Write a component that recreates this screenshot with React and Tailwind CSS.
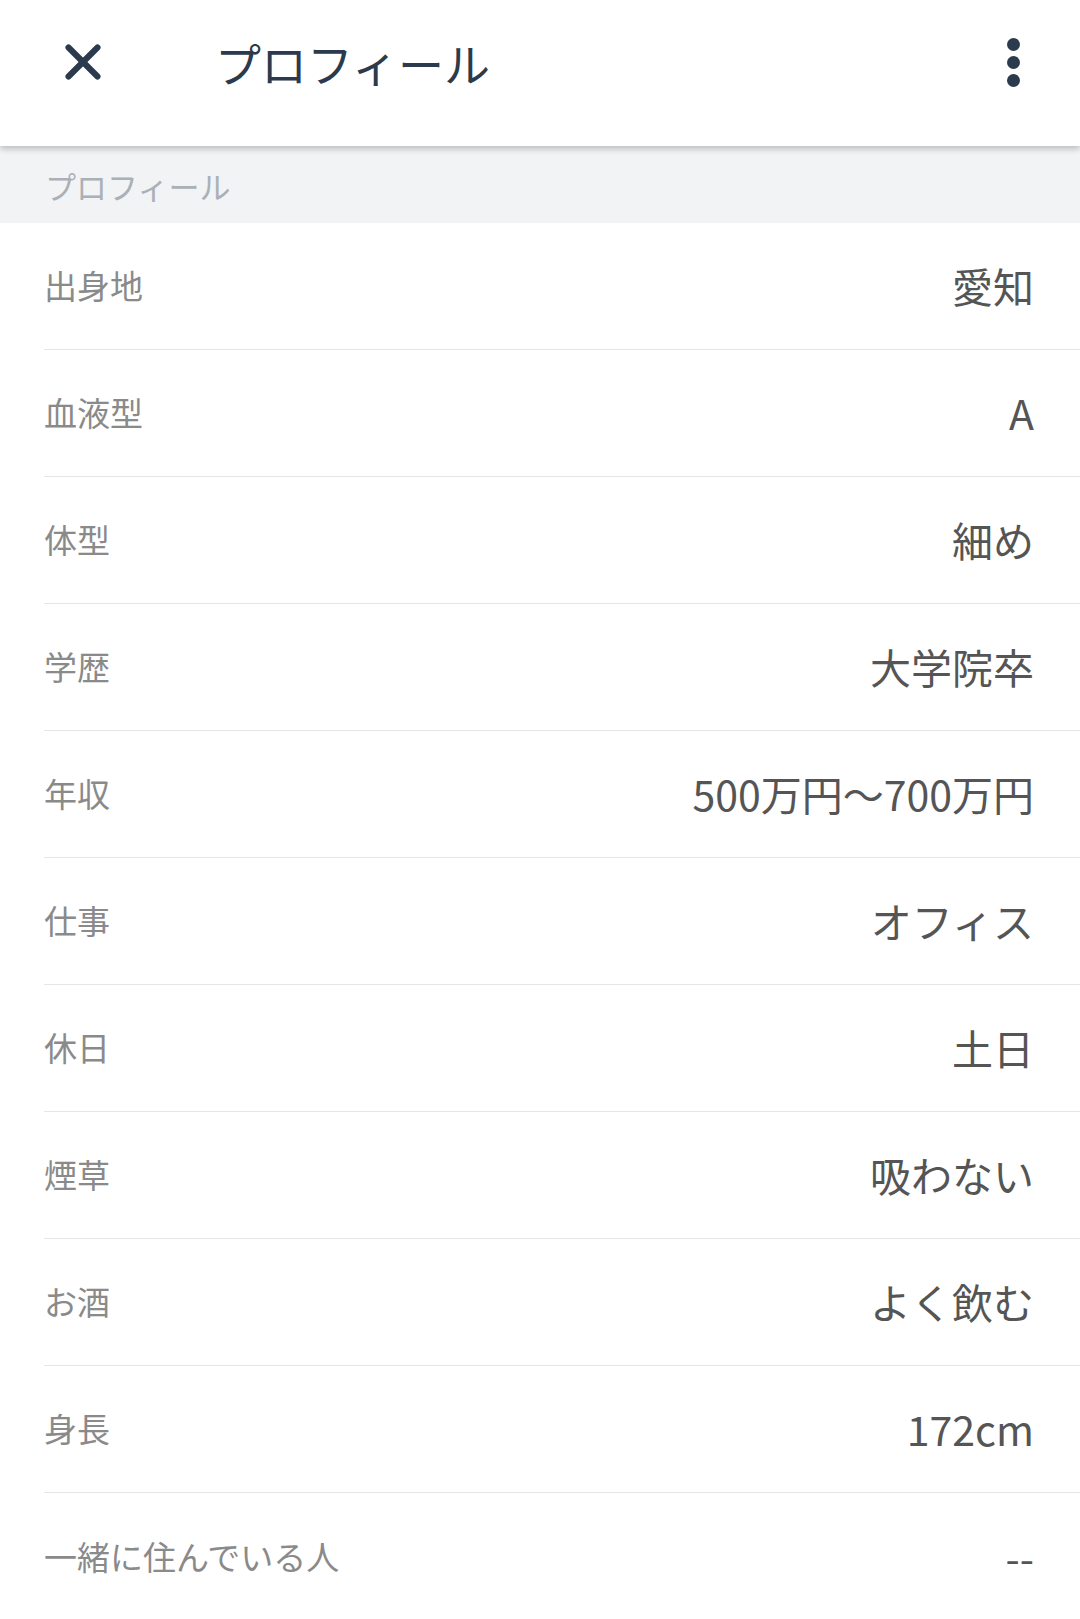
import { X } from 'lucide-react';

const rows = [
  { label: '出身地', value: '愛知' },
  { label: '血液型', value: 'A' },
  { label: '体型', value: '細め' },
  { label: '学歴', value: '大学院卒' },
  { label: '年収', value: '500万円〜700万円' },
  { label: '仕事', value: 'オフィス' },
  { label: '休日', value: '土日' },
  { label: '煙草', value: '吸わない' },
  { label: 'お酒', value: 'よく飲む' },
  { label: '身長', value: '172cm' },
  { label: '一緒に住んでいる人', value: '--' }
];

const font = { fontFamily: '"Noto Sans CJK JP", "Noto Sans", sans-serif' };

const Row = ({ label, value, last }) => (
  <div className="pl-[44px]">
    <div
      className={`flex h-[127px] items-center justify-between pr-[46px] ${
        last ? '' : 'border-b border-[#e6e6e6]'
      }`}
    >
      <span className="text-[33px] text-[#8a8a8a]">{label}</span>
      <span className="text-[41px] text-[#555555]">{value}</span>
    </div>
  </div>
);

export default function App() {
  return (
    <div className="h-[1619px] w-[1080px] overflow-hidden bg-white" style={font}>
      <header className="relative z-10 flex h-[146px] items-center bg-white pb-[22px] shadow-[0_3px_6px_rgba(0,0,0,0.22)]">
        <div className="flex w-[215px] pl-[54px]">
          <X size={58} strokeWidth={2.5} className="text-[#2c3a4d]" />
        </div>
        <h1 className="flex-1 text-[46px] font-normal text-[#2c3a4d]">プロフィール</h1>
        <div className="flex flex-col items-center gap-[5px] pr-[60px]">
          <span className="h-[13px] w-[13px] rounded-full bg-[#2c3a4d]" />
          <span className="h-[13px] w-[13px] rounded-full bg-[#2c3a4d]" />
          <span className="h-[13px] w-[13px] rounded-full bg-[#2c3a4d]" />
        </div>
      </header>
      <div className="flex h-[77px] items-center bg-[#f2f3f5] pl-[45px] pt-[4px]">
        <span className="text-[31px] text-[#aab0b7]">プロフィール</span>
      </div>
      {rows.map((r, i) => (
        <Row key={r.label} {...r} last={i === rows.length - 1} />
      ))}
    </div>
  );
}
